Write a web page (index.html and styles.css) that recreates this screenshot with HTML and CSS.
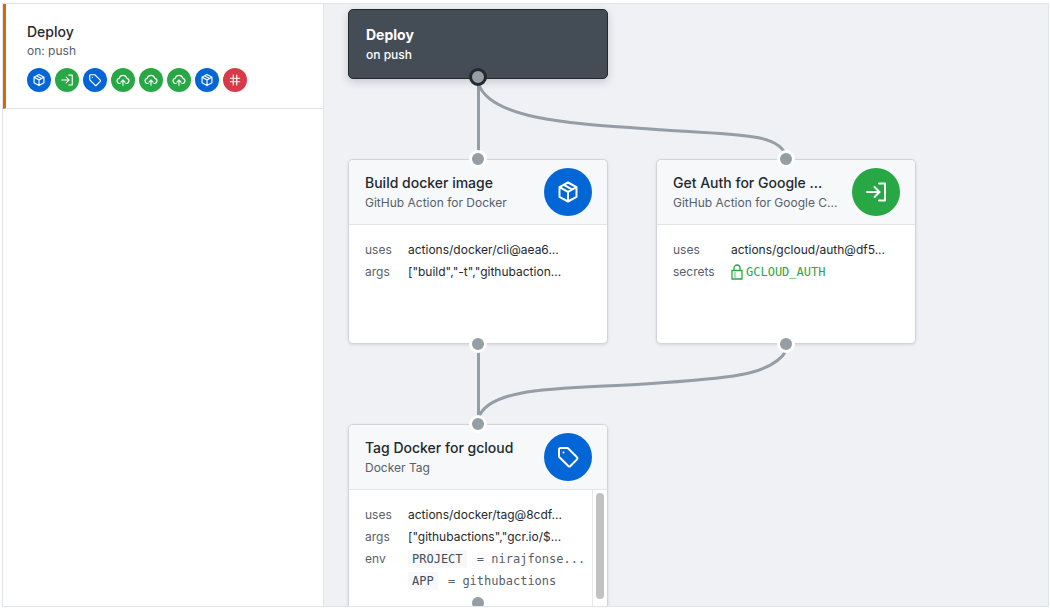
FILE: index.html
```html
<!DOCTYPE html>
<html lang="en">
<head>
    <meta charset="UTF-8">
    <meta name="viewport" content="width=device-width, initial-scale=1.0">
    <title>Deploy workflow</title>
    <link rel="stylesheet" href="styles.css">
</head>
<body>
    <svg class="iconDefs" width="0" height="0">
        <defs>
            <symbol id="iconBox" viewBox="0 0 24 24">
                <path d="M12 2.5l8.5 4.6v9.8L12 21.5l-8.5-4.6V7.100z M3.500 7.100L12 11.800l8.500-4.700 M12 11.800v9.700 M7.800 4.900l8.400 4.600"/>
            </symbol>
            <symbol id="iconLogin" viewBox="0 0 24 24">
                <path d="M3 12h12 M10.500 7l5 5-5 5 M15 3.500h6v17h-6"/>
            </symbol>
            <symbol id="iconTag" viewBox="0 0 24 24">
                <path d="M3 4.500A1.500 1.500 0 0 1 4.500 3h7.200l9.300 9.300a1.500 1.500 0 0 1 0 2.100l-6.600 6.600a1.500 1.500 0 0 1-2.100 0L3 11.700z M7.500 7.500h.01"/>
            </symbol>
            <symbol id="iconUpload" viewBox="0 0 24 24">
                <path d="M7 18H6a4.500 4.500 0 0 1-.6-8.900 6.800 6.800 0 0 1 13.200 0A4.500 4.500 0 0 1 18 18h-1 M12 21v-8 M8.500 15.500L12 12l3.500 3.500"/>
            </symbol>
            <symbol id="iconHash" viewBox="0 0 24 24">
                <path d="M4 9h16 M4 15h16 M9 3.500v17 M15 3.500v17"/>
            </symbol>
            <symbol id="iconLock" viewBox="0 0 12 16">
                <path d="M1 6.500h10v8.500H1z M3 6.500V4a3 3 0 0 1 6 0v2.500 M3.500 9h1 M3.500 11h1 M3.500 13h1"/>
            </symbol>
        </defs>
    </svg>

    <div class="app">
        <aside class="sidebar">
            <div class="workflow">
                <div class="workflowName">Deploy</div>
                <div class="workflowOn">on: push</div>
                <div class="badges">
                    <span class="badge blue"><svg><use href="#iconBox"/></svg></span>
                    <span class="badge green"><svg><use href="#iconLogin"/></svg></span>
                    <span class="badge blue"><svg><use href="#iconTag"/></svg></span>
                    <span class="badge green"><svg><use href="#iconUpload"/></svg></span>
                    <span class="badge green"><svg><use href="#iconUpload"/></svg></span>
                    <span class="badge green"><svg><use href="#iconUpload"/></svg></span>
                    <span class="badge blue"><svg><use href="#iconBox"/></svg></span>
                    <span class="badge red"><svg><use href="#iconHash"/></svg></span>
                </div>
            </div>
        </aside>

        <main class="canvas">
            <svg class="wires" width="726" height="604">
                <path d="M154.500 72V153"/>
                <path d="M154.500 80C168 118 260 120 340 126C410 131 456 128 462.500 153"/>
                <path d="M154.500 338V418"/>
                <path d="M462.500 346C449 372 400 375 320 380C240 385 165 382 154.500 414"/>
            </svg>

            <div class="trigger">
                <div class="triggerName">Deploy</div>
                <div class="triggerOn">on push</div>
                <span class="port portDark"></span>
            </div>

            <div class="node nodeBuild">
                <span class="port portTop"></span>
                <div class="nodeHead">
                    <div class="nodeTitles">
                        <div class="nodeName">Build docker image</div>
                        <div class="nodeSub">GitHub Action for Docker</div>
                    </div>
                    <span class="nodeIcon blue"><svg><use href="#iconBox"/></svg></span>
                </div>
                <div class="nodeBody">
                    <div class="row"><span class="key">uses</span><span class="val">actions/docker/cli@aea6...</span></div>
                    <div class="row"><span class="key">args</span><span class="val">["build","-t","githubaction...</span></div>
                </div>
                <span class="port portBottom"></span>
            </div>

            <div class="node nodeAuth">
                <span class="port portTop"></span>
                <div class="nodeHead">
                    <div class="nodeTitles">
                        <div class="nodeName">Get Auth for Google ...</div>
                        <div class="nodeSub">GitHub Action for Google C...</div>
                    </div>
                    <span class="nodeIcon green"><svg><use href="#iconLogin"/></svg></span>
                </div>
                <div class="nodeBody">
                    <div class="row"><span class="key">uses</span><span class="val">actions/gcloud/auth@df5...</span></div>
                    <div class="row"><span class="key">secrets</span><span class="secret"><svg class="lock"><use href="#iconLock"/></svg>GCLOUD_AUTH</span></div>
                </div>
                <span class="port portBottom"></span>
            </div>

            <div class="node nodeTag">
                <span class="port portTop"></span>
                <div class="nodeHead">
                    <div class="nodeTitles">
                        <div class="nodeName">Tag Docker for gcloud</div>
                        <div class="nodeSub">Docker Tag</div>
                    </div>
                    <span class="nodeIcon blue"><svg><use href="#iconTag"/></svg></span>
                </div>
                <div class="nodeBody nodeScroll">
                    <div class="row"><span class="key">uses</span><span class="val">actions/docker/tag@8cdf...</span></div>
                    <div class="row"><span class="key">args</span><span class="val">["githubactions","gcr.io/$...</span></div>
                    <div class="row"><span class="key">env</span><span class="envItem"><code>PROJECT</code> = <span class="envVal">nirajfonse...</span></span></div>
                    <div class="row"><span class="key"></span><span class="envItem"><code>APP</code> = <span class="envVal">githubactions</span></span></div>
                    <div class="scrollTrack"><div class="scrollThumb"></div></div>
                </div>
                <span class="port portBottom portClipped"></span>
            </div>
        </main>
    </div>
</body>
</html>
```

FILE: styles.css
```css
* {
    box-sizing: border-box;
}
html, body {
    height: 100%;
}
body {
    margin: 0;
    background-color: white;
    color: #24292e;
    font-family: Inter, "Liberation Sans", sans-serif;
    overflow: hidden;
}
.iconDefs {
    position: absolute;
}
.app {
    display: flex;
    width: 1050px;
    height: 608px;
    padding: 3px 1px 0 2px;
}
.sidebar {
    width: 322px;
    height: 604px;
    background-color: white;
    border: 1px solid #e1e4e8;
    border-right: 1px solid #e1e4e8;
}
.workflow {
    height: 105px;
    padding: 19px 24px 0 21px;
    border-left: 3px solid #e36209;
    border-bottom: 1px solid #e1e4e8;
    margin-bottom: 0;
}
.workflowName {
    font-size: 14px;
    line-height: 18px;
    font-weight: 500;
}
.workflowOn {
    font-size: 12px;
    line-height: 18px;
    color: #586069;
    margin-top: 1px;
}
.badges {
    display: flex;
    gap: 4px;
    margin-top: 8px;
}
.badge {
    display: flex;
    align-items: center;
    justify-content: center;
    width: 24px;
    height: 24px;
    border-radius: 50%;
}
.badge svg {
    width: 14px;
    height: 14px;
    fill: none;
    stroke: white;
    stroke-width: 2;
    stroke-linecap: round;
    stroke-linejoin: round;
}
.blue {
    background-color: #0366d6;
}
.green {
    background-color: #28a745;
}
.red {
    background-color: #d73a49;
}
.canvas {
    position: relative;
    flex: 1;
    height: 604px;
    overflow: hidden;
    background-color: #eff1f5;
    border-top: 1px solid #e1e4e8;
    border-right: 1px solid #e1e4e8;
    border-bottom: 1px solid #e1e4e8;
}
.wires {
    position: absolute;
    top: 0;
    left: 0;
    fill: none;
    stroke: #959da5;
    stroke-width: 3;
}
.trigger {
    position: absolute;
    left: 24px;
    top: 5px;
    width: 260px;
    height: 70px;
    padding: 15px 17px;
    background-color: #444d56;
    border: 1px solid #24292e;
    border-radius: 5px;
    color: white;
    box-shadow: 0 3px 8px rgba(36, 41, 46, 0.2);
}
.triggerName {
    font-size: 14px;
    line-height: 20px;
    font-weight: 700;
}
.triggerOn {
    font-size: 12px;
    line-height: 20px;
    font-weight: 500;
}
.node {
    position: absolute;
    width: 260px;
    background-color: white;
    border: 1px solid #d1d5da;
    border-radius: 5px;
    box-shadow: 0 1px 3px rgba(36, 41, 46, 0.12);
}
.nodeBuild {
    left: 24px;
    top: 155px;
    height: 185px;
}
.nodeAuth {
    left: 332px;
    top: 155px;
    height: 185px;
}
.nodeTag {
    left: 24px;
    top: 420px;
    height: 190px;
}
.nodeHead {
    display: flex;
    align-items: center;
    justify-content: space-between;
    height: 65px;
    padding: 0 15px 0 16px;
    background-color: #f6f8fa;
    border-bottom: 1px solid #e1e4e8;
    border-radius: 5px 5px 0 0;
}
.nodeName {
    font-size: 14px;
    line-height: 20px;
    font-weight: 500;
    white-space: nowrap;
}
.nodeSub {
    font-size: 12px;
    line-height: 18px;
    color: #586069;
    margin-top: 1px;
    white-space: nowrap;
}
.nodeIcon {
    display: flex;
    align-items: center;
    justify-content: center;
    flex: none;
    width: 48px;
    height: 48px;
    border-radius: 50%;
}
.nodeIcon svg {
    width: 24px;
    height: 24px;
    fill: none;
    stroke: white;
    stroke-width: 2;
    stroke-linecap: round;
    stroke-linejoin: round;
}
.nodeBody {
    position: relative;
    padding: 14px 16px;
    font-size: 12px;
    line-height: 22px;
}
.row {
    display: flex;
    white-space: nowrap;
}
.key {
    width: 43px;
    color: #586069;
    flex: none;
}
.nodeAuth .key {
    width: 58px;
}
.secret {
    display: flex;
    align-items: center;
    color: #28a745;
    font-family: "DejaVu Sans Mono", monospace;
}
.lock {
    width: 12px;
    height: 16px;
    margin-right: 3px;
    fill: none;
    stroke: #28a745;
    stroke-width: 1.300;
}
.envItem {
    font-family: "DejaVu Sans Mono", monospace;
    color: #586069;
}
.envItem code {
    display: inline-block;
    padding: 0 4px;
    height: 18px;
    line-height: 18px;
    margin-right: 3px;
    font-family: inherit;
    background-color: #f6f8fa;
    color: #444d56;
}
.scrollTrack {
    position: absolute;
    top: 0;
    right: 0;
    width: 15px;
    height: 140px;
    background-color: white;
    border-left: 1px solid #e8e8e8;
}
.scrollThumb {
    width: 8px;
    height: 106px;
    margin: 3px 0 0 3px;
    border-radius: 4px;
    background-color: #c1c1c1;
}
.port {
    position: absolute;
    left: 50%;
    width: 18px;
    height: 18px;
    margin-left: -9px;
    background-color: #959da5;
    border: 3px solid white;
    border-radius: 50%;
}
.portTop {
    top: -10px;
}
.portBottom {
    bottom: -10px;
}
.portClipped {
    bottom: 0;
    top: 169px;
}
.portDark {
    top: 58px;
    border-color: #24292e;
    background-color: #959da5;
}
```
